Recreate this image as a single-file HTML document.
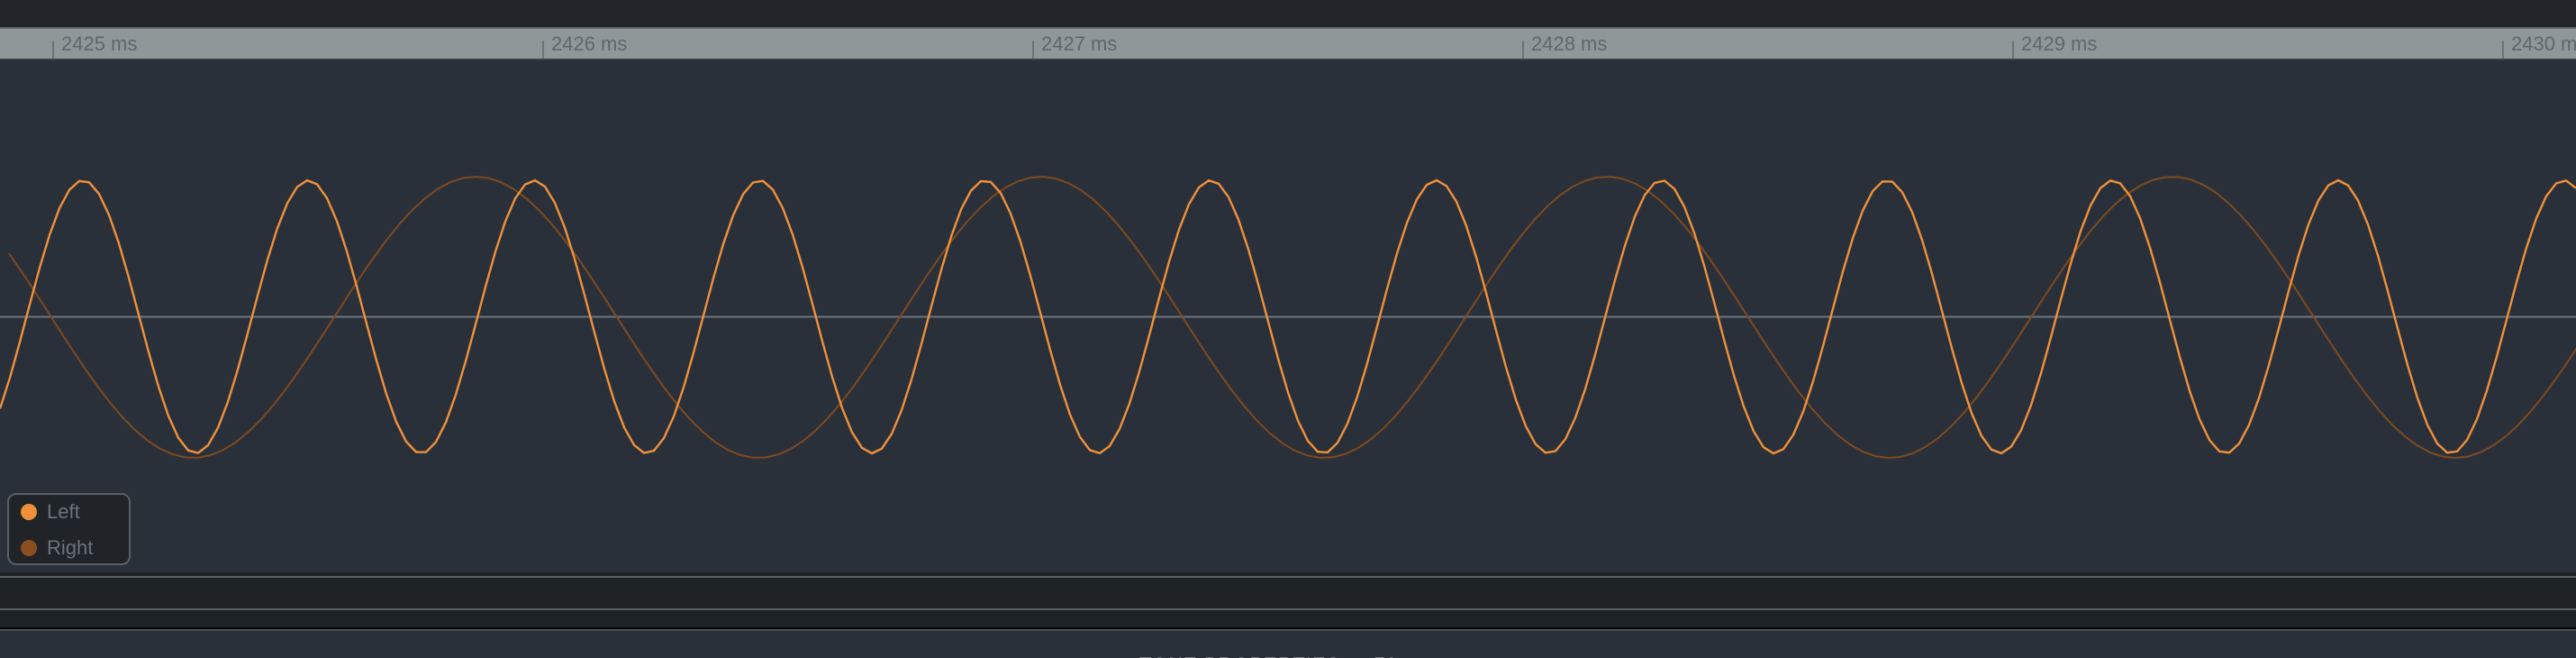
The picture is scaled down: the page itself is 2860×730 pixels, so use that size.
<!DOCTYPE html>
<html><head><meta charset="utf-8"><style>
html,body{margin:0;padding:0;width:2860px;height:730px;overflow:hidden;background:#2a303a;font-family:"Liberation Sans",sans-serif}
.abs{position:absolute}
</style></head><body>
<div class="abs" style="left:0;top:0;width:2860px;height:30px;background:#212529"></div>
<div class="abs" style="left:0;top:30px;width:2860px;height:2px;background:#5d6468"></div>
<div class="abs" style="left:0;top:32px;width:2860px;height:33px;background:#8f9799"></div>
<div class="abs" style="left:0;top:65px;width:2860px;height:2px;background:#3a4046"></div>
<div id="ruler"></div>
<svg class="abs" style="left:0;top:0" width="2860" height="730">
<line x1="0" y1="351.5" x2="2860" y2="351.5" stroke="#6c757d" stroke-width="2"/>
<polyline id="r" fill="none" stroke="#7f4a1e" stroke-width="2"/>
<polyline id="l" fill="none" stroke="#f0913a" stroke-width="2.4"/>
</svg>
<div class="abs" style="left:8px;top:547px;width:133px;height:76px;border:2px solid #586065;border-radius:10px;background:#202428"></div>
<div class="abs" style="left:23px;top:559px;width:18px;height:18px;border-radius:50%;background:#ef8f3b"></div>
<div class="abs" style="left:52px;top:555px;font-size:22px;color:#6c7479">Left</div>
<div class="abs" style="left:23px;top:599px;width:18px;height:18px;border-radius:50%;background:#8a4f1f"></div>
<div class="abs" style="left:52px;top:595px;font-size:22px;color:#6c7479">Right</div>
<div class="abs" style="left:0;top:635px;width:2860px;height:61px;background:#202326"></div>
<div class="abs" style="left:0;top:639px;width:2860px;height:2px;background:#596064"></div>
<div class="abs" style="left:0;top:675px;width:2860px;height:2px;background:#596064"></div>
<div class="abs" style="left:0;top:696px;width:2860px;height:2px;background:#000"></div>
<div class="abs" style="left:0;top:698px;width:2860px;height:2px;background:#4a5156"></div>
<div class="abs" style="left:0;top:700px;width:2860px;height:30px;overflow:hidden">
<div class="abs" style="left:1265px;top:25px;font-size:22px;line-height:26px;color:#d0d4d8;letter-spacing:1px;white-space:nowrap">TONE PROPERTIES — 70</div>
</div>
<script>
var h='';var labels=[2425,2426,2427,2428,2429,2430];
for(var i=0;i<6;i++){var x=58+i*544;
h+='<div class="abs" style="left:'+x+'px;top:45px;width:2px;height:20px;background:#6c7479"></div>';
h+='<div class="abs" style="left:'+(x+10)+'px;top:36px;font-size:22px;color:#5f676c;white-space:nowrap">'+labels[i]+' ms</div>';}
document.getElementById('ruler').innerHTML=h;
var p='';for(var x=0;x<=2860;x+=11){var y=351.5-151.5*Math.cos(2*Math.PI*(x-92)/250.4);p+=x+','+y.toFixed(1)+' ';}
document.getElementById('l').setAttribute('points',p);
p='';for(var x=10;x<=2870;x+=14){var y=352-156*Math.cos(2*Math.PI*(x-528)/628);p+=x+','+y.toFixed(1)+' ';}
document.getElementById('r').setAttribute('points',p);
</script>
</body></html>
